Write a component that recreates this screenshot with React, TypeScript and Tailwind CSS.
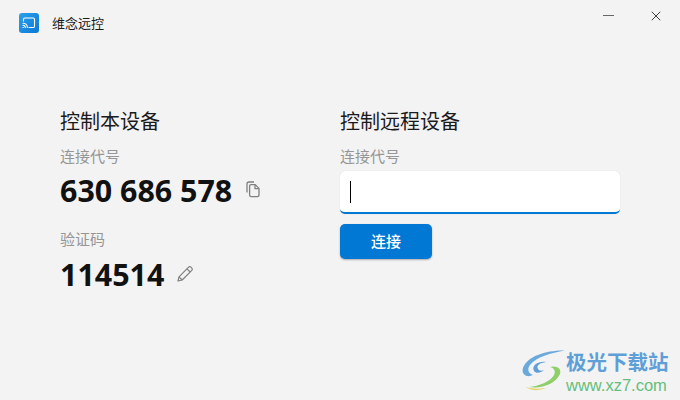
import { X } from 'lucide-react';

const cjk = "font-['Noto_Sans_CJK_SC','Open_Sans',sans-serif]";

function AppIcon() {
  return (
    <div className="w-5 h-5 rounded-[3px] bg-gradient-to-br from-[#2ba0ea] to-[#0a78d6] flex items-center justify-center">
      <svg width="14" height="12" viewBox="0 0 14 12" fill="none" stroke="white" strokeWidth="1.1" strokeLinecap="round">
        <path d="M1.5 4V2.2A1.2 1.2 0 0 1 2.7 1h8.6a1.2 1.2 0 0 1 1.2 1.2v7.1a1.2 1.2 0 0 1-1.2 1.2H7" />
        <path d="M1 6.2a4.4 4.4 0 0 1 4.4 4.3" />
        <path d="M1 8.3a2.3 2.3 0 0 1 2.3 2.2" />
        <path d="M1 10.5h.3" />
      </svg>
    </div>
  );
}

function CopyIcon() {
  return (
    <svg width="14" height="17" viewBox="0 0 14 17" fill="none" stroke="#808080" strokeWidth="1.3" className="ml-[14px] -mt-[3px]">
      <path d="M1 11.5V3A2 2 0 0 1 3 1h5" />
      <path d="M3.6 5A1.4 1.4 0 0 1 5 3.6h4.2L13 7.4V14a1.6 1.6 0 0 1-1.6 1.6H5.2A1.6 1.6 0 0 1 3.6 14Z" />
      <path d="M9 3.8V7.6h3.8" />
    </svg>
  );
}

function PencilIcon() {
  return (
    <svg width="16" height="16" viewBox="0 0 16 16" fill="none" stroke="#7f7f7f" strokeWidth="1.2" strokeLinejoin="round" className="ml-[13px] -mt-[3px]">
      <path d="M1 15l1-4.2L11.6 1.2a1.6 1.6 0 0 1 2.3 0l.9.9a1.6 1.6 0 0 1 0 2.3L5.2 14Z" />
      <path d="M2 10.8L5.2 14" />
      <path d="M10 2.8l3.2 3.2" />
    </svg>
  );
}

function Watermark() {
  return (
    <div className="absolute right-[11px] bottom-[5px] flex items-start w-[146px] h-[49px]">
      <svg width="44" height="41" viewBox="0 0 44 41" fill="none" className="shrink-0 -ml-[1px] mt-[4px]">
        <path d="M43 0.5C25 0 5 6 1 18c-2 7 4 10 10 7C6 23 5 19 8 15 14 7 29 3 43 .5Z" fill="#6aa9dc" />
        <path d="M12 21c-3-6 5-10 12-9-6 1-10 3-8 7 1 2 4 2 6 1-3 3-8 4-10 1Z" fill="#5f9ed6" />
        <path d="M7 37c14 2 27-4 31-13 2-6-4-9-10-7 4 1 6 4 4 8-4 7-15 11-25 12Z" fill="#8ecf6a" />
        <path d="M4 37c5 4 13 4 20 1-7 1-14 1-20-1Z" fill="#e6d56a" />
      </svg>
      <div className="flex flex-col">
        <span className={`text-[20.5px] leading-[30px] font-bold text-[#5f9fd8] whitespace-nowrap ${cjk}`}>极光下载站</span>
        <span className="text-[16.5px] leading-[19px] text-[#63bf7c] font-['Liberation_Sans',sans-serif] whitespace-nowrap">www.xz7.com</span>
      </div>
    </div>
  );
}

export default function App() {
  return (
    <div className={`relative w-[680px] h-[400px] bg-[#f3f3f3] overflow-hidden ${cjk}`}>
      {/* title bar */}
      <div className="flex items-center h-[46px] pl-[19px] pr-[16px]">
        <AppIcon />
        <span className="ml-[13px] text-[13px] text-[#1a1a1a]">维念远控</span>
        <div className="ml-auto flex items-center gap-[34px] -mt-[15px]">
          <div className="w-[11px] h-[1.5px] bg-[#666]" />
          <X size={16} strokeWidth={1.2} className="text-[#111]" />
        </div>
      </div>

      {/* panels */}
      <div className="flex pl-[60px] pt-[60px]">
        <section className="w-[280px]">
          <h2 className="text-[20px] leading-[30px] text-[#1b1b1b]">控制本设备</h2>
          <p className="mt-[10px] text-[15px] leading-[20px] text-[#969696]">连接代号</p>
          <div className="mt-[6px] flex items-center h-[38px]">
            <span className="text-[30.4px] font-bold text-[#111] font-['Open_Sans',sans-serif]">630 686 578</span>
            <CopyIcon />
          </div>
          <p className="mt-[19px] text-[15px] leading-[20px] text-[#969696]">验证码</p>
          <div className="mt-[7px] flex items-center h-[38px]">
            <span className="text-[30.4px] font-bold text-[#111] font-['Open_Sans',sans-serif]">114514</span>
            <PencilIcon />
          </div>
        </section>

        <section className="w-[280px]">
          <h2 className="text-[20px] leading-[30px] text-[#1b1b1b]">控制远程设备</h2>
          <p className="mt-[10px] text-[15px] leading-[20px] text-[#969696]">连接代号</p>
          <div className="mt-[5px] h-[43px] bg-white rounded-[5px] border-b-2 border-[#0078d4] shadow-[0_0_1px_rgba(0,0,0,0.2)] flex items-center pl-[10px]">
            <div className="w-px h-[22px] bg-black" />
          </div>
          <button className="mt-[10px] w-[92px] h-[35px] rounded-[5px] bg-[#0078d4] text-white text-[15px] font-medium shadow-[0_1px_2px_rgba(0,0,0,0.3)]">连接</button>
        </section>
      </div>

      <Watermark />
    </div>
  );
}
